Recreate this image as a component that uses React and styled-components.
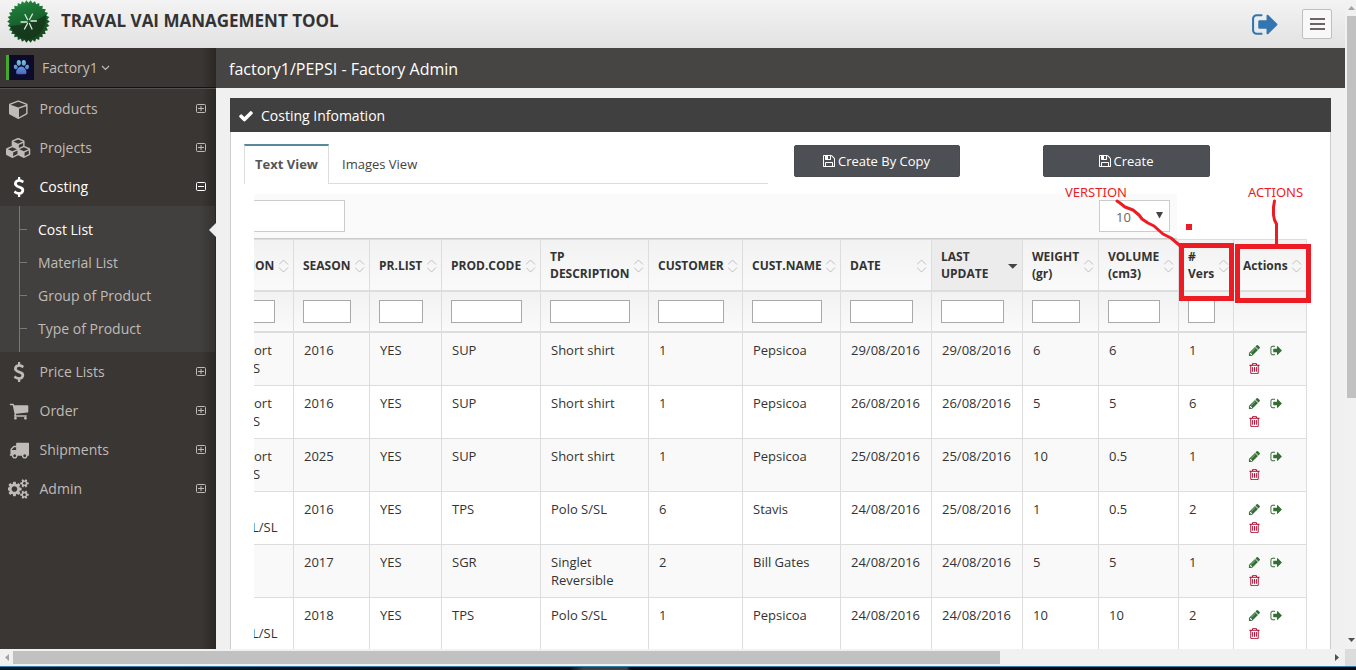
import React from "react";
import styled, { createGlobalStyle, css } from "styled-components";

const GlobalStyle = createGlobalStyle`
  * { box-sizing: border-box; }
  html, body { margin: 0; padding: 0; background: #fff; overflow: hidden; }
  body { font-family: "Open Sans", "Noto Sans", Arial, sans-serif; font-size: 13px; color: #333; }
`;

/* ---------- icons ---------- */

const paths = {
  check: "M1671 566q0 40-28 68l-724 724-136 136q-28 28-68 28t-68-28l-136-136-362-362q-28-28-28-68t28-68l136-136q28-28 68-28t68 28l294 295 656-657q28-28 68-28t68 28l136 136q28 28 28 68z",
  dollar: "M1362 1185q0 153-99.5 263.5t-258.5 136.5v175q0 14-9 23t-23 9h-135q-13 0-22.5-9.5t-9.5-22.5v-175q-66-9-127.5-31t-101.5-44.5-74-48-46.5-37.5-17.5-18q-17-21-2-41l103-135q7-10 23-12 15-2 24 9l2 2q113 99 243 125 37 8 74 8 81 0 142.5-43t61.5-122q0-28-15-53t-33.5-42-58.5-37.5-66-32-80-32.5q-39-16-61.5-25t-61.5-26.5-62.5-31-56.5-35.5-53.5-42.5-43.5-49-35.5-58-21-66.5-8.5-78q0-138 98-242t255-134v-180q0-13 9.5-22.5t22.5-9.5h135q14 0 23 9t9 23v176q57 6 110.5 23t87 33.5 63.5 37.5 39 29 15 14q17 18 5 38l-81 146q-8 15-23 16-14 3-27-7-3-3-14.5-12t-39-26.5-58.5-32-74.5-26-85.5-11.5q-95 0-155 43t-60 111q0 26 8.5 48t29.5 41.5 39.5 33 56 31 60.5 27 70 27.5q53 20 81 31.5t76 35 75.5 42.5 62 50 53 63.5 31.5 76.5 13 94z",
  cube: "M896 1629l640-349v-636l-640 233v752zm-64-865l698-254-698-254-698 254zm832-252v768q0 35-18 65t-49 47l-704 384q-28 16-61 16t-61-16l-704-384q-31-17-49-47t-18-65v-768q0-40 23-73t61-47l704-256q22-8 44-8t44 8l704 256q38 14 61 47t23 73z",
  cubes: "M640 1632l384-192v-314l-384 164v342zm-64-454l404-173-404-173-404 173zm1088 454l384-192v-314l-384 164v342zm-64-454l404-173-404-173-404 173zm-448-293l384-165v-266l-384 164v267zm-64-379l441-189-441-189-441 189zm1088 518v416q0 36-19 67t-52 47l-448 224q-25 14-57 14t-57-14l-448-224q-5-2-7-4-2 2-7 4l-448 224q-25 14-57 14t-57-14l-448-224q-33-16-52-47t-19-67v-416q0-38 21.5-70t56.5-48l434-186v-400q0-38 21.5-70t56.5-48l448-192q23-10 50-10t50 10l448 192q35 16 56.5 48t21.5 70v400l434 186q36 16 57 48t21 70z",
  cart: "M704 1536q0 52-38 90t-90 38-90-38-38-90 38-90 90-38 90 38 38 90zm896 0q0 52-38 90t-90 38-90-38-38-90 38-90 90-38 90 38 38 90zm128-1088v512q0 24-16.5 42.5t-40.5 21.5l-1044 122q13 60 13 70 0 16-24 64h920q26 0 45 19t19 45-19 45-45 19h-1024q-26 0-45-19t-19-45q0-11 8-31.5t16-36 21.5-40 15.5-29.5l-177-823h-204q-26 0-45-19t-19-45 19-45 45-19h256q16 0 28.5 6.5t19.5 15.5 13 24.5 8 26 5.5 29.5 4.5 26h1201q26 0 45 19t19 45z",
  truck: "M640 1408q0-52-38-90t-90-38-90 38-38 90 38 90 90 38 90-38 38-90zm-384-512h384v-256h-158q-13 0-22 9l-195 195q-9 9-9 22v30zm1280 512q0-52-38-90t-90-38-90 38-38 90 38 90 90 38 90-38 38-90zm256-1088v1024q0 15-4 26.5t-13.5 18.5-16.5 11.5-23.5 6-22.5 2-25.5 0-22.5-.5q0 106-75 181t-181 75-181-75-75-181h-384q0 106-75 181t-181 75-181-75-75-181h-64q-3 0-22.5.5t-25.5 0-22.5-2-23.5-6-16.5-11.5-13.5-18.5-4-26.5q0-26 19-45t45-19v-320q0-8-.5-35t0-38 2.5-34.5 6.5-37 14-30.5 22.5-30l198-198q19-19 50.5-32t58.5-13h160v-192q0-26 19-45t45-19h1024q26 0 45 19t19 45z",
  cogs: "M832 896q0-106-75-181t-181-75-181 75-75 181 75 181 181 75 181-75 75-181zm768 512q0-52-38-90t-90-38-90 38-38 90q0 53 37.5 90.5t90.5 37.5 90.5-37.5 37.5-90.5zm0-1024q0-52-38-90t-90-38-90 38-38 90q0 53 37.5 90.5t90.5 37.5 90.5-37.5 37.5-90.5zm-384 421v185q0 10-7 19.5t-16 10.5l-155 24q-11 35-32 76 34 48 90 115 7 11 7 20 0 12-7 19-23 30-82.5 89.5t-78.5 59.5q-11 0-21-7l-115-90q-37 19-77 31-11 108-23 155-7 24-30 24h-186q-11 0-20-7.5t-10-17.5l-23-153q-34-10-75-31l-118 89q-7 7-20 7-11 0-21-8-144-133-144-160 0-9 7-19 10-14 41-53t47-61q-23-44-35-82l-152-24q-10-1-17-9.5t-7-19.5v-185q0-10 7-19.5t16-10.5l155-24q11-35 32-76-34-48-90-115-7-11-7-20 0-12 7-20 22-30 82-89t79-59q11 0 21 7l115 90q34-18 77-32 11-108 23-154 7-24 30-24h186q11 0 20 7.5t10 17.5l23 153q34 10 75 31l118-89q8-7 20-7 11 0 21 8 144 133 144 160 0 9-7 19-12 16-42 54t-45 60q23 48 34 82l152 23q10 2 17 10.5t7 19.5zm640 533v140q0 16-149 31-12 27-30 52 51 113 51 138 0 4-4 7-122 71-124 71-8 0-46-47t-52-68q-20 2-30 2t-30-2q-14 21-52 68t-46 47q-2 0-124-71-4-3-4-7 0-25 51-138-18-25-30-52-149-15-149-31v-140q0-16 149-31 13-29 30-52-51-113-51-138 0-4 4-7 4-2 35-20t59-34 30-16q8 0 46 46.5t52 67.5q20-2 30-2t30 2q51-71 92-112l6-2q4 0 124 70 4 3 4 7 0 25-51 138 17 23 30 52 149 15 149 31zm0-1024v140q0 16-149 31-12 27-30 52 51 113 51 138 0 4-4 7-122 71-124 71-8 0-46-47t-52-68q-20 2-30 2t-30-2q-14 21-52 68t-46 47q-2 0-124-71-4-3-4-7 0-25 51-138-18-25-30-52-149-15-149-31v-140q0-16 149-31 13-29 30-52-51-113-51-138 0-4 4-7 4-2 35-20t59-34 30-16q8 0 46 46.5t52 67.5q20-2 30-2t30 2q51-71 92-112l6-2q4 0 124 70 4 3 4 7 0 25-51 138 17 23 30 52 149 15 149 31z",
  floppy: "M512 1536h768v-384h-768v384zm896 0h128v-896q0-14-10-38.5t-20-34.5l-281-281q-10-10-34-20t-39-10v416q0 40-28 68t-68 28h-576q-40 0-68-28t-28-68v-416h-128v1280h128v-416q0-40 28-68t68-28h832q40 0 68 28t28 68v416zm-384-928v-320q0-13-9.5-22.5t-22.5-9.5h-192q-13 0-22.5 9.5t-9.5 22.5v320q0 13 9.5 22.5t22.5 9.5h192q13 0 22.5-9.5t9.5-22.5zm640 32v928q0 40-28 68t-68 28h-1344q-40 0-68-28t-28-68v-1344q0-40 28-68t68-28h928q40 0 88 20t76 48l280 280q28 28 48 76t20 88z",
  pencil: "M491 1536l91-91-235-235-91 91v107h128v128h107zm523-928q0-22-22-22-10 0-17 7l-542 542q-7 7-7 17 0 22 22 22 10 0 17-7l542-542q7-7 7-17zm-54-192l416 416-832 832h-416v-416zm683 96q0 53-37 90l-166 166-416-416 166-165q36-38 90-38 53 0 91 38l235 234q37 39 37 91z",
  trash: "M704 736v576q0 14-9 23t-23 9h-64q-14 0-23-9t-9-23v-576q0-14 9-23t23-9h64q14 0 23 9t9 23zm256 0v576q0 14-9 23t-23 9h-64q-14 0-23-9t-9-23v-576q0-14 9-23t23-9h64q14 0 23 9t9 23zm256 0v576q0 14-9 23t-23 9h-64q-14 0-23-9t-9-23v-576q0-14 9-23t23-9h64q14 0 23 9t9 23zm128 724v-948h-896v948q0 22 7 40.5t14.5 27 10.5 8.5h832q3 0 10.5-8.5t14.5-27 7-40.5zm-672-1076h448l-48-117q-7-9-17-11h-317q-10 2-17 11zm928 32v64q0 14-9 23t-23 9h-96v948q0 83-47 143.5t-113 60.5h-832q-66 0-113-58.5t-47-141.5v-952h-96q-14 0-23-9t-9-23v-64q0-14 9-23t23-9h309l70-167q15-37 54-63t79-26h320q40 0 79 26t54 63l70 167h309q14 0 23 9t9 23z",
  signOut: "M704 1440q0 4 1 20t.5 26.5-3 23.5-10 19.5-20.5 6.5h-320q-119 0-203.5-84.5t-84.5-203.5v-704q0-119 84.5-203.5t203.5-84.5h320q13 0 22.5 9.5t9.5 22.5q0 4 1 20t.5 26.5-3 23.5-10 19.5-20.5 6.5h-320q-66 0-113 47t-47 113v704q0 66 47 113t113 47h312l11.5 1 11.5 3 8 5.5 7 9 2 13.5zm928-544q0 26-19 45l-544 544q-19 19-45 19t-45-19-19-45v-288h-448q-26 0-45-19t-19-45v-384q0-26 19-45t45-19h448v-288q0-26 19-45t45-19 45 19l544 544q19 19 19 45z",
};

const Svg = styled.svg`
  display: block;
  flex: none;
  fill: currentColor;
`;

function Icon({ name, size, units = 1792 }) {
  return (
    <Svg width={(size * units) / 1792} height={size} viewBox={`0 0 ${units} 1792`}>
      <path d={paths[name]} />
    </Svg>
  );
}

function ToggleIcon({ open }) {
  return (
    <Svg width="10" height="10" viewBox="0 0 10 10">
      <rect x="0.5" y="0.5" width="9" height="8" rx="1" fill="none" stroke="currentColor" />
      <rect x="2" y="4" width="6" height="1" />
      {!open && <rect x="4.500" y="2" width="1" height="5" />}
    </Svg>
  );
}

function SortIcon({ active }) {
  if (active) {
    return (
      <Svg width="10" height="14" viewBox="0 0 10 14">
        <path d="M0 5h9.500L4.750 9.800z" fill="#444" />
      </Svg>
    );
  }
  return (
    <Svg width="10" height="14" viewBox="0 0 10 14">
      <path d="M0 5.500 4.500 1 9 5.500M0 8.500 4.500 13 9 8.500" fill="none" stroke="#c0c0c0" />
    </Svg>
  );
}

function LogoBadge() {
  const teeth = Array.from({ length: 60 }, (_, i) => {
    const r = i % 2 ? 18.8 : 21.3;
    const a = (i * Math.PI) / 30;
    return `${(21.5 + r * Math.cos(a)).toFixed(2)},${(21.5 + r * Math.sin(a)).toFixed(2)}`;
  }).join(" ");
  return (
    <Svg width="43" height="43" viewBox="0 0 43 43">
      <defs>
        <linearGradient id="badge" x1="0.1" y1="0" x2="0.4" y2="1">
          <stop offset="0" stopColor="#2fa04a" />
          <stop offset="0.2" stopColor="#1f7a38" />
          <stop offset="0.6" stopColor="#15602b" />
          <stop offset="1" stopColor="#17451f" />
        </linearGradient>
      </defs>
      <polygon points={teeth} fill="url(#badge)" />
      <path d="M3 26Q22 25 39 15Q40 34 21 40Q7 37 3 26z" fill="#173219" opacity="0.75" />
      <g stroke="#dfe8df" strokeWidth="1.300" strokeLinecap="round">
        <path d="M14 22h6M24 21h5.500M18 14.500l2.500 5M25.500 14l-3 5.500M17.500 29l3-5.500M25 29l-2.500-5.500" />
      </g>
    </Svg>
  );
}

function PawPhoto() {
  return (
    <Svg width="25" height="25" viewBox="0 0 25 25">
      <defs>
        <linearGradient id="paw" x1="0" y1="5" x2="0" y2="20" gradientUnits="userSpaceOnUse">
          <stop offset="0" stopColor="#74cbe6" />
          <stop offset="1" stopColor="#4a5cc4" />
        </linearGradient>
      </defs>
      <rect width="25" height="25" fill="#0c0b2a" />
      <g fill="url(#paw)">
        <ellipse cx="9.800" cy="7.800" rx="2.100" ry="2.900" />
        <ellipse cx="14.800" cy="7.800" rx="2.100" ry="2.900" />
        <ellipse cx="6.700" cy="12" rx="1.900" ry="2.300" transform="rotate(-20 6.700 12)" />
        <ellipse cx="18" cy="12" rx="1.900" ry="2.300" transform="rotate(20 18 12)" />
        <path d="M12.300 11.500c2.500 0 5.200 3.500 5.200 5.800 0 2.800-3 1.900-5.200 1.900s-5.200.9-5.200-1.900c0-2.300 2.700-5.800 5.200-5.800z" />
      </g>
    </Svg>
  );
}

/* ---------- frame ---------- */

const Screen = styled.div`
  position: relative;
  display: grid;
  grid-template-columns: 1345px 11px;
  grid-template-rows: 649px 17px 4px;
  width: 1356px;
  height: 670px;
  overflow: hidden;
`;

const Page = styled.div`
  display: flex;
  flex-direction: column;
  min-width: 0;
  overflow: hidden;
`;

const VScroll = styled.div`
  display: flex;
  flex-direction: column;
  align-items: flex-end;
  background: #f1f1f1;
`;

const VThumb = styled.div`
  width: 9px;
  height: 382px;
  margin-bottom: auto;
  background: #c1c1c1;
`;

const ArrowBox = styled.div`
  display: flex;
  align-items: center;
  justify-content: center;
  flex: none;
  width: ${(p) => p.$w}px;
  height: ${(p) => p.$h}px;
  color: ${(p) => p.$color};
`;

const HScroll = styled.div`
  display: flex;
  align-items: center;
  background: #f1f1f1;
`;

const HThumb = styled.div`
  width: 987px;
  height: 13px;
  margin-right: auto;
  background: #c1c1c1;
`;

const Corner = styled.div`
  background: #dcdcdc;
`;

const Taskbar = styled.div`
  grid-column: 1 / -1;
  border-top: 1px solid #2f7fa8;
  background: linear-gradient(90deg, #071a24, #05090f 42%, #3b3e41 43%, #3b3e41 46.200%, #05090f 46.500%, #04080c);
`;

/* ---------- header ---------- */

const Header = styled.header`
  display: flex;
  flex: none;
  height: 48px;
  padding: 0 13px 0 7px;
  background: linear-gradient(#f3f3f3, #e2e2e2);
`;

const Brand = styled.h1`
  flex: 1;
  margin: 0 0 0 11px;
  font-size: 17px;
  font-weight: 700;
  line-height: 42px;
  color: #333;
`;

const LogoutLink = styled.a`
  display: flex;
  margin: 10px 24px 0 0;
  color: #3276b1;
`;

const MenuButton = styled.button`
  display: flex;
  flex-direction: column;
  align-items: center;
  justify-content: center;
  gap: 3px;
  width: 30px;
  height: 30px;
  margin-top: 9px;
  padding: 0;
  border: 1px solid #bfbfbf;
  border-radius: 2px;
  background: #f8f8f8;
`;

const MenuBar = styled.span`
  width: 15px;
  height: 2px;
  background: #6d6469;
`;

/* ---------- sidebar ---------- */

const Columns = styled.div`
  display: flex;
  flex: 1;
  min-height: 0;
`;

const Sidebar = styled.aside`
  flex: none;
  width: 216px;
  color: #c0bbb7;
  font-size: 14px;
  background: linear-gradient(90deg, transparent 202px, rgba(0, 0, 0, 0.28)), #3a3633;
`;

const UserBar = styled.div`
  display: flex;
  align-items: center;
  height: 41px;
  padding: 0 0 1px 6px;
  border-bottom: 1px solid #525151;
  box-shadow: inset 0 -1px 0 #111;

  > svg { margin-left: 3px; }
`;

const Avatar = styled.div`
  border-left: 3px solid #40ac2b;
  margin-right: 8px;
`;

const NavItem = styled.a`
  display: flex;
  align-items: center;
  height: 39px;
  padding-right: 10px;
  color: ${(p) => (p.$active ? "#fff" : "inherit")};
`;

const NavIcon = styled.span`
  display: flex;
  justify-content: center;
  width: 37px;
  margin-right: 2.500px;
  color: ${(p) => (p.$active ? "#fff" : "#c0bbb7")};
`;

const NavText = styled.span`
  flex: 1;
`;

const SubMenu = styled.div`
  width: 215px;
  height: 146px;
  padding: 7px 0 7px 19px;
  background: linear-gradient(90deg, transparent 200px, rgba(0, 0, 0, 0.2)), linear-gradient(#7a7774, #7a7774) 19px 0 / 1px 100% no-repeat, #41403e;
`;

const SubItem = styled.a`
  display: flex;
  align-items: center;
  height: 33px;
  color: ${(p) => (p.$active ? "#fff" : "inherit")};

  &::before {
    content: "";
    width: 8px;
    height: 1px;
    margin-right: 11px;
    background: #7a7774;
  }

  svg { margin-left: auto; margin-right: -1px; color: #ededed; }
`;

/* ---------- content ---------- */

const Main = styled.main`
  display: flex;
  flex-direction: column;
  flex: 1;
  min-width: 0;
  background: #f0f0f0;
`;

const Ribbon = styled.div`
  flex: none;
  height: 40px;
  padding-left: 13px;
  font-size: 16px;
  line-height: 43px;
  color: #fff;
  background: #474544;
`;

const Panel = styled.section`
  display: flex;
  flex-direction: column;
  flex: 1;
  min-height: 0;
  margin: 10px 14px 0;
`;

const PanelTitle = styled.header`
  display: flex;
  align-items: center;
  flex: none;
  gap: 7px;
  height: 34px;
  padding: 1px 0 0 8px;
  font-size: 14px;
  color: #fff;
  background: #404040;
`;

const PanelBody = styled.div`
  flex: 1;
  min-height: 0;
  padding: 12px 0 0 13px;
  border: solid #ccc;
  border-width: 0 1px;
  background: #fff;
  overflow: hidden;
`;

const TopRow = styled.div`
  display: flex;
  height: 40px;
`;

const Tabs = styled.nav`
  display: flex;
  width: 524px;
  margin-right: 26px;
  border-bottom: 1px solid #ddd;
`;

const Tab = styled.a`
  height: 40px;
  line-height: 41px;
  padding: 0 10px;
  ${(p) =>
    p.$active
      ? css`
          width: 85px;
          line-height: 37px;
          border: solid #ddd;
          border-width: 0 1px;
          border-top: 2px solid #57889c;
          font-weight: 700;
          color: #555;
          background: #fff;
          white-space: nowrap;
        `
      : css`
          margin-left: 3px;
          color: #444;
        `}
`;

const Button = styled.button`
  display: flex;
  align-items: center;
  justify-content: center;
  gap: 2px;
  width: ${(p) => p.$w}px;
  height: 32px;
  margin: 1px 83px 0 0;
  padding: 0 2px 0 0;
  border: 1px solid #484b4f;
  border-radius: 2px;
  font: 13px "Open Sans", sans-serif;
  color: #fff;
  background: #4c4f53;
`;

const Scroller = styled.div`
  margin: 10px 0 0 10px;
`;

const Toolbar = styled.div`
  display: flex;
  justify-content: space-between;
  width: 923px;
  height: 45px;
  padding: 6px 7px 0 0;
  border-bottom: 1px solid #ccc;
  background: #fafafa;
`;

const SearchField = styled.div`
  width: 91px;
  height: 32px;
  border: 1px solid #ccc;
  border-left: 0;
  background: #fff;
`;

const LengthSelect = styled.div`
  display: flex;
  align-items: center;
  justify-content: space-between;
  width: 71px;
  height: 32px;
  padding: 2px 6px 0 16px;
  border: 1px solid #ccc;
  color: #666;
  background: #fff;

  svg { margin-bottom: 3px; }
`;

const Grid = styled.div`
  width: 1053px;
`;

const rowLayout = css`
  display: grid;
  grid-template-columns: 40px 76px 72px 99px 108px 94px 98px 91px 91px 76px 80px 55px 73px;
`;

const HeadRow = styled.div`
  ${rowLayout}
  height: 53px;
  border-top: 1px solid #ddd;
  border-bottom: 2px solid #ddd;
  background: linear-gradient(#f2f2f2, #fafafa);
`;

const HeadCell = styled.div`
  display: flex;
  align-items: center;
  justify-content: space-between;
  padding: 0 4px 0 ${(p) => (p.$first ? 0 : 9)}px;
  border-right: 1px solid #ddd;
  font-size: 12px;
  font-weight: 700;
  line-height: 17px;
  white-space: pre;
  color: #333;
  background: ${(p) => (p.$sorted ? "#ececec" : "transparent")};
  overflow: hidden;

  svg { margin-top: 1px; }
`;

const HeadText = styled.span`
  margin-left: ${(p) => (p.$first ? -3 : 0)}px;
`;

const FilterRow = styled.div`
  ${rowLayout}
  height: 41px;
  border-bottom: 2px solid #ddd;
  background: linear-gradient(#f2f2f2, #fafafa);
`;

const FilterCell = styled.div`
  padding: 8px 18px 0 ${(p) => (p.$first ? 0 : 9)}px;
  border-right: 1px solid #ddd;
`;

const FilterInput = styled.div`
  height: 23px;
  border: 1px solid #a9a9a9;
  border-left-width: ${(p) => (p.$first ? 0 : 1)}px;
  background: #fff;
`;

const BodyRow = styled.div`
  ${rowLayout}
  height: 53px;
  border-bottom: 1px solid #ddd;
  background: ${(p) => (p.$odd ? "#f9f9f9" : "#fff")};
`;

const Cell = styled.div`
  padding: 8px 0 0 ${(p) => (p.$first ? 0 : 10)}px;
  border-right: 1px solid #ddd;
  line-height: 18px;
  white-space: pre;
  overflow: hidden;
`;

const ClippedLine = styled.div`
  height: 18px;
  margin-left: ${(p) => -p.$cut}px;
`;

const Actions = styled.div`
  display: flex;
  flex-wrap: wrap;
  align-content: flex-start;
  gap: 5px 9px;
  padding: 11px 20px 0 14px;
  border-right: 1px solid #ddd;
  color: #356e35;
`;

const DeleteLink = styled.span`
  color: #a90329;
`;

/* ---------- mark-up over the page ---------- */

const MarkBox = styled.div`
  position: absolute;
  left: ${(p) => p.$x}px;
  top: ${(p) => p.$y}px;
  width: ${(p) => p.$w}px;
  height: ${(p) => p.$h}px;
  border: 5px solid #ed1c24;
`;

const MarkLabel = styled.div`
  position: absolute;
  left: ${(p) => p.$x}px;
  top: 184px;
  font: 13px/17px "Noto Sans", sans-serif;
  color: #ed1c24;
`;

const MarkLines = styled.svg`
  position: absolute;
  left: 0;
  top: 0;
  pointer-events: none;
`;

/* ---------- data ---------- */

const nav = [
  { label: "Products", icon: "cube", units: 1664 },
  { label: "Projects", icon: "cubes", units: 2304 },
  { label: "Costing", icon: "dollar", open: true, items: ["Cost List", "Material List", "Group of Product", "Type of Product"] },
  { label: "Price Lists", icon: "dollar" },
  { label: "Order", icon: "cart" },
  { label: "Shipments", icon: "truck" },
  { label: "Admin", icon: "cogs", units: 1920 },
];

const heads = [
  "ION", "SEASON", "PR.LIST", "PROD.CODE", "TP\nDESCRIPTION", "CUSTOMER", "CUST.NAME",
  "DATE", "LAST\nUPDATE", "WEIGHT\n(gr)", "VOLUME\n(cm3)", "#\nVers", "Actions",
];

const rows = [
  [["ort", "S"], "2016", "YES", "SUP", "Short shirt", "1", "Pepsicoa", "29/08/2016", "29/08/2016", "6", "6", "1"],
  [["ort", "S"], "2016", "YES", "SUP", "Short shirt", "1", "Pepsicoa", "26/08/2016", "26/08/2016", "5", "5", "6"],
  [["ort", "S"], "2025", "YES", "SUP", "Short shirt", "1", "Pepsicoa", "25/08/2016", "25/08/2016", "10", "0.5", "1"],
  [["", "L/SL"], "2016", "YES", "TPS", "Polo S/SL", "6", "Stavis", "24/08/2016", "25/08/2016", "1", "0.5", "2"],
  [["", ""], "2017", "YES", "SGR", "Singlet\nReversible", "2", "Bill Gates", "24/08/2016", "24/08/2016", "5", "5", "1"],
  [["", "L/SL"], "2018", "YES", "TPS", "Polo S/SL", "1", "Pepsicoa", "24/08/2016", "24/08/2016", "10", "10", "2"],
];

export default function App() {
  return (
    <Screen>
      <GlobalStyle />
      <Page>
        <Header>
          <LogoBadge />
          <Brand>TRAVAL VAI MANAGEMENT TOOL</Brand>
          <LogoutLink><Icon name="signOut" size={29} units={1664} /></LogoutLink>
          <MenuButton><MenuBar /><MenuBar /><MenuBar /></MenuButton>
        </Header>
        <Columns>
          <Sidebar>
            <UserBar>
              <Avatar><PawPhoto /></Avatar>
              Factory1
              <Svg width="9" height="6" viewBox="0 0 9 6">
                <path d="M1 1l3.500 3.500L8 1" fill="none" stroke="currentColor" strokeWidth="1.200" />
              </Svg>
            </UserBar>
            {nav.map((n) => (
              <React.Fragment key={n.label}>
                <NavItem $active={n.open}>
                  <NavIcon $active={n.open}><Icon name={n.icon} size={20} units={n.units} /></NavIcon>
                  <NavText>{n.label}</NavText>
                  <ToggleIcon open={n.open} />
                </NavItem>
                {n.items && (
                  <SubMenu>
                    {n.items.map((s, i) => (
                      <SubItem key={s} $active={i === 0}>
                        {s}
                        {i === 0 && <Svg width="7" height="14" viewBox="0 0 7 14"><path d="M7 0v14L0 7z" /></Svg>}
                      </SubItem>
                    ))}
                  </SubMenu>
                )}
              </React.Fragment>
            ))}
          </Sidebar>
          <Main>
            <Ribbon>factory1/PEPSI - Factory Admin</Ribbon>
            <Panel>
              <PanelTitle><Icon name="check" size={16} />Costing Infomation</PanelTitle>
              <PanelBody>
                <TopRow>
                  <Tabs>
                    <Tab $active>Text View</Tab>
                    <Tab>Images View</Tab>
                  </Tabs>
                  <Button $w={166}><Icon name="floppy" size={14} />Create By Copy</Button>
                  <Button $w={167}><Icon name="floppy" size={14} />Create</Button>
                </TopRow>
                <Scroller>
                  <Toolbar>
                    <SearchField />
                    <LengthSelect>
                      10
                      <Svg width="7" height="7" viewBox="0 0 7 7"><path d="M0 0h7L3.500 6.500z" fill="#444" /></Svg>
                    </LengthSelect>
                  </Toolbar>
                  <Grid>
                    <HeadRow>
                      {heads.map((h, i) => (
                        <HeadCell key={h} $first={i === 0} $sorted={i === 8}>
                          <HeadText $first={i === 0}>{h}</HeadText>
                          <SortIcon active={i === 8} />
                        </HeadCell>
                      ))}
                    </HeadRow>
                    <FilterRow>
                      {heads.map((h, i) => (
                        <FilterCell key={h} $first={i === 0}>
                          {i < 12 && <FilterInput $first={i === 0} />}
                        </FilterCell>
                      ))}
                    </FilterRow>
                    {rows.map((r, i) => (
                      <BodyRow key={i} $odd={i % 2 === 0}>
                        <Cell $first>
                          <ClippedLine $cut={0}>{r[0][0]}</ClippedLine>
                          <ClippedLine $cut={r[0][1].length > 1 ? 2 : 1}>{r[0][1]}</ClippedLine>
                        </Cell>
                        {r.slice(1).map((c, j) => <Cell key={j}>{c}</Cell>)}
                        <Actions>
                          <Icon name="pencil" size={13} />
                          <Icon name="signOut" size={13} units={1664} />
                          <DeleteLink><Icon name="trash" size={13} /></DeleteLink>
                        </Actions>
                      </BodyRow>
                    ))}
                  </Grid>
                </Scroller>
              </PanelBody>
            </Panel>
          </Main>
        </Columns>
      </Page>
      <VScroll>
        <ArrowBox $w={9} $h={16} $color="#a3a3a3">
          <Svg width="7" height="4" viewBox="0 0 7 4"><path d="M0 4h7L3.500 0z" /></Svg>
        </ArrowBox>
        <VThumb />
        <ArrowBox $w={9} $h={18} $color="#505050">
          <Svg width="7" height="4" viewBox="0 0 7 4"><path d="M0 0h7L3.500 4z" /></Svg>
        </ArrowBox>
      </VScroll>
      <HScroll>
        <ArrowBox $w={13} $h={17} $color="#a3a3a3">
          <Svg width="4" height="7" viewBox="0 0 4 7"><path d="M4 0v7L0 3.500z" /></Svg>
        </ArrowBox>
        <HThumb />
        <ArrowBox $w={17} $h={17} $color="#505050">
          <Svg width="4" height="7" viewBox="0 0 4 7"><path d="M0 0v7l4-3.500z" /></Svg>
        </ArrowBox>
      </HScroll>
      <Corner />
      <Taskbar />
      <MarkLabel $x={1065}>VERSTION</MarkLabel>
      <MarkLabel $x={1248}>ACTIONS</MarkLabel>
      <MarkLines width="1356" height="320" viewBox="0 0 1356 320">
        <g fill="none" stroke="#ed1c24" strokeWidth="3" strokeLinecap="round" strokeLinejoin="round">
          <path d="M1117 201l3 2 5 4 8 3 6 5 3 4 6 4 6 3 9 8 8 4 7 6 4 4" />
          <path d="M1274.500 201l-1 6v8l1 5 2 4v21" />
        </g>
        <rect x="1186" y="224" width="6" height="6" fill="#ed1c24" />
      </MarkLines>
      <MarkBox $x={1179} $y={243} $w={55} $h={58} />
      <MarkBox $x={1235} $y={244} $w={76} $h={59} />
    </Screen>
  );
}
